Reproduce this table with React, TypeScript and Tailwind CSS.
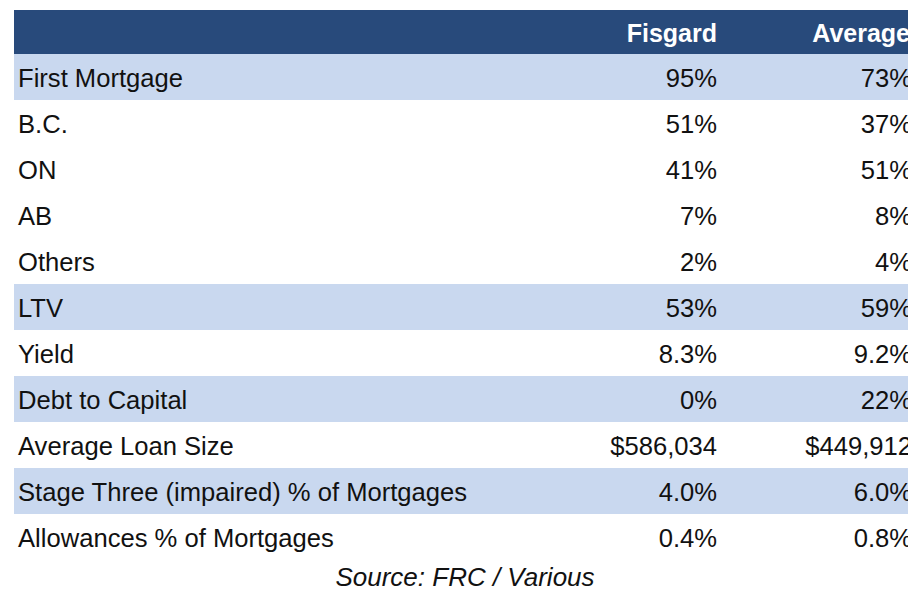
const rows = [
  { label: "First Mortgage", fisgard: "95%", average: "73%", band: true },
  { label: "B.C.", fisgard: "51%", average: "37%", band: false },
  { label: "ON", fisgard: "41%", average: "51%", band: false },
  { label: "AB", fisgard: "7%", average: "8%", band: false },
  { label: "Others", fisgard: "2%", average: "4%", band: false },
  { label: "LTV", fisgard: "53%", average: "59%", band: true },
  { label: "Yield", fisgard: "8.3%", average: "9.2%", band: false },
  { label: "Debt to Capital", fisgard: "0%", average: "22%", band: true },
  { label: "Average Loan Size", fisgard: "$586,034", average: "$449,912", band: false },
  { label: "Stage Three (impaired) % of Mortgages", fisgard: "4.0%", average: "6.0%", band: true },
  { label: "Allowances % of Mortgages", fisgard: "0.4%", average: "0.8%", band: false },
];

const App = () => {
  return (
    <div className="w-[908px] h-[592px] overflow-hidden bg-white font-['Liberation_Sans',Arial,sans-serif] text-[#111111]">
      <div className="pt-[10px] pl-[14px]">
        {/* Table */}
        <div className="w-[902px]">
          <div className="flex h-[44px] items-center pt-[3px] bg-[#284a7b] text-white font-bold text-[25px]">
            <div className="flex-1" />
            <div className="w-[200px] pr-[4px] text-right">Fisgard</div>
            <div className="w-[195px] pr-[6px] text-right">Average</div>
          </div>
          {rows.map((r) => (
            <div
              key={r.label}
              className={`flex h-[46px] items-center pt-[3px] text-[25.6px] ${r.band ? "bg-[#c9d8ef]" : "bg-white"}`}
            >
              <div className="flex-1 pl-[4px] whitespace-nowrap">{r.label}</div>
              <div className="w-[200px] pr-[4px] text-right">{r.fisgard}</div>
              <div className="w-[195px] pr-[4px] text-right whitespace-nowrap">{r.average}</div>
            </div>
          ))}
        </div>
        {/* Source */}
        <div className="w-[902px] pt-[2px] text-center italic text-[26px] leading-[30px]">
          Source: FRC / Various
        </div>
      </div>
    </div>
  );
};

export default App;
